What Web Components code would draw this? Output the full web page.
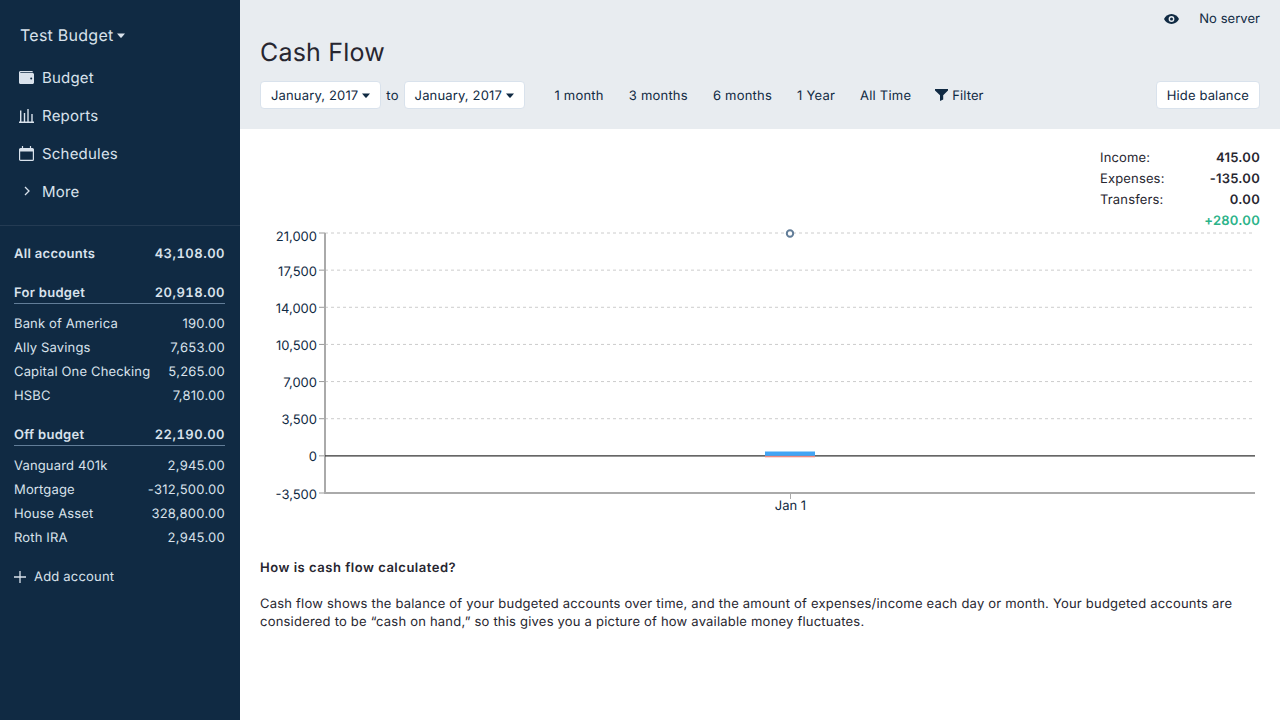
<!DOCTYPE html>
<html>
<head>
<meta charset="utf-8">
<title>Cash Flow</title>
<style>
  html, body { margin: 0; height: 100%; overflow: hidden; }
  body { font-family: Inter, "Liberation Sans", sans-serif; font-size: 13px; color: #272630; text-rendering: geometricPrecision; }
</style>
</head>
<body>
<app-shell>
  <app-sidebar slot="side"></app-sidebar>
  <report-header slot="top"></report-header>
  <cash-flow-summary slot="main"></cash-flow-summary>
  <cash-flow-chart slot="main"></cash-flow-chart>
  <report-notes slot="main"></report-notes>
</app-shell>

<script>
class AppShell extends HTMLElement {
    constructor() {
        super();
        this.attachShadow({mode: 'open'});
        this.shadowRoot.innerHTML = `
        <style>
            :host { display: flex; width: 1280px; height: 720px; background: #fff; }
            .side { flex: 0 0 240px; }
            .content { flex: 1; display: flex; flex-direction: column; min-width: 0; }
            .main { padding: 0 20px; }
        </style>
        <div class="side"><slot name="side"></slot></div>
        <div class="content">
            <slot name="top"></slot>
            <div class="main"><slot name="main"></slot></div>
        </div>`;
    }
}

class NavItem extends HTMLElement {
    constructor() {
        super();
        this.attachShadow({mode: 'open'});
        this.shadowRoot.innerHTML = `
        <style>
            :host { display: flex; align-items: center; height: 38px; padding-left: 19px; color: #d9e2ec; font-size: 15px; letter-spacing: 0.2px; }
            .icon { width: 15px; height: 15px; margin-right: 8px; display: flex; align-items: center; justify-content: center; }
            ::slotted(svg) { display: block; }
        </style>
        <span class="icon"><slot name="icon"></slot></span><slot></slot>`;
    }
}

class AccountRow extends HTMLElement {
    constructor() {
        super();
        this.attachShadow({mode: 'open'});
    }
    connectedCallback() {
        this.shadowRoot.innerHTML = `
        <style>
            :host { display: block; color: #d9e2ec; font-size: 13px; letter-spacing: 0.15px; }
            .row { display: flex; justify-content: space-between; align-items: center; height: 22px; padding-top: 2px; }
            .amt { letter-spacing: 0.25px; }
            :host([kind]) .row { font-weight: 600; letter-spacing: 0.3px; height: 20px; }
            :host([kind="head"]) .row { border-bottom: 1px solid #627d98; }
            :host([kind]) .amt { letter-spacing: 0.5px; font-variant-numeric: tabular-nums; }
        </style>
        <div class="row"><span>${this.getAttribute('name')}</span><span class="amt">${this.getAttribute('amount')}</span></div>`;
    }
}

class AppSidebar extends HTMLElement {
    constructor() {
        super();
        this.attachShadow({mode: 'open'});
        this.shadowRoot.innerHTML = `
        <style>
            :host { display: flex; flex-direction: column; height: 720px; background: #102a43; box-sizing: border-box; }
            .title { display: flex; align-items: center; height: 20px; margin: 25px 0 13px 20px; color: #d9e2ec; font-size: 16px; letter-spacing: 0.25px; }
            .title svg { margin-left: 4px; }
            .nav { padding-bottom: 15px; border-bottom: 1px solid #243b53; }
            .accounts { padding: 16px 15px 0 14px; }
            .group { margin-top: 17px; }
            .group + .group { margin-top: 16px; }
            .list { margin-top: 7px; }
            .add { display: flex; align-items: center; gap: 8px; margin-top: 15px; height: 24px; padding-top: 1px; color: #d9e2ec; font-size: 13px; letter-spacing: 0.2px; }
        </style>
        <div class="title">Test Budget<svg width="8" height="5" viewBox="0 0 8 5"><path d="M0 .5h8L4.6 4.500a.8.8 0 0 1-1.200 0z" fill="#d9e2ec"/></svg></div>
        <div class="nav">
            <nav-item>
                <svg slot="icon" width="15" height="13" viewBox="0 0 15 13"><path d="M1.500 0h11c.8 0 1.500.5 1.500 1.300H1.600c-.5 0-.6.700 0 .700H13.500c.8 0 1.500.6 1.500 1.400v8.100c0 .8-.7 1.500-1.500 1.500h-12C.7 13 0 12.300 0 11.500V1.500C0 .7.700 0 1.500 0z" fill="#d9e2ec"/><circle cx="12.200" cy="7.500" r="1" fill="#102a43"/></svg>
                Budget
            </nav-item>
            <nav-item>
                <svg slot="icon" width="15" height="15" viewBox="0 0 15 15" fill="none" stroke="#d9e2ec" stroke-width="1.400"><path d="M0 14.300h15M1.700 14V2.500M5.500 14V5M9 14V1M13 14V6"/></svg>
                Reports
            </nav-item>
            <nav-item>
                <svg slot="icon" width="15" height="15" viewBox="0 0 15 15" fill="none" stroke="#d9e2ec" stroke-width="1.200"><rect x=".6" y="2.600" width="13.800" height="11.800" rx="1"/><path d="M1 3.500h13v1.500H1z" fill="#d9e2ec"/><path d="M3.500 0v3M11.500 0v3"/></svg>
                Schedules
            </nav-item>
            <nav-item>
                <svg slot="icon" width="6" height="10" viewBox="0 0 6 10" fill="none" stroke="#d9e2ec" stroke-width="1.300"><path d="M1 1l4 4-4 4"/></svg>
                More
            </nav-item>
        </div>
        <div class="accounts">
            <account-row kind="total" name="All accounts" amount="43,108.00"></account-row>
            <div class="group">
                <account-row kind="head" name="For budget" amount="20,918.00"></account-row>
                <div class="list">
                    <account-row name="Bank of America" amount="190.00"></account-row>
                    <account-row name="Ally Savings" amount="7,653.00"></account-row>
                    <account-row name="Capital One Checking" amount="5,265.00"></account-row>
                    <account-row name="HSBC" amount="7,810.00"></account-row>
                </div>
            </div>
            <div class="group">
                <account-row kind="head" name="Off budget" amount="22,190.00"></account-row>
                <div class="list">
                    <account-row name="Vanguard 401k" amount="2,945.00"></account-row>
                    <account-row name="Mortgage" amount="-312,500.00"></account-row>
                    <account-row name="House Asset" amount="328,800.00"></account-row>
                    <account-row name="Roth IRA" amount="2,945.00"></account-row>
                </div>
            </div>
            <div class="add">
                <svg width="12" height="12" viewBox="0 0 12 12" stroke="#d9e2ec" stroke-width="1.300"><path d="M6 0v12M0 6h12"/></svg>
                Add account
            </div>
        </div>`;
    }
}

class ReportButton extends HTMLElement {
    constructor() {
        super();
        this.attachShadow({mode: 'open'});
        this.shadowRoot.innerHTML = `
        <style>
            :host { display: inline-flex; align-items: center; height: 24px; padding: 2px 10px 0; background: #fff; border: 1px solid #d9e2ec; border-radius: 4px; color: #102a43; font-size: 13px; letter-spacing: 0.15px; white-space: nowrap; }
            svg { display: none; margin-left: 4px; margin-top: -2px; }
            :host([caret]) svg { display: block; }
        </style>
        <slot></slot><svg width="8" height="5" viewBox="0 0 8 5"><path d="M0 .5h8L4.6 4.500a.8.8 0 0 1-1.200 0z" fill="#102a43"/></svg>`;
    }
}

class ReportHeader extends HTMLElement {
    constructor() {
        super();
        this.attachShadow({mode: 'open'});
        this.shadowRoot.innerHTML = `
        <style>
            :host { display: block; height: 129px; box-sizing: border-box; background: #e8ecf0; padding: 0 20px; color: #102a43; font-size: 13px; letter-spacing: 0.15px; }
            .top { display: flex; justify-content: flex-end; align-items: center; height: 37px; gap: 20px; letter-spacing: 0.05px; }
            h1 { margin: 0; padding-top: 1px; height: 30px; line-height: 30px; font-size: 25px; font-weight: 400; color: #272630; letter-spacing: 0.2px; }
            .bar { display: flex; align-items: center; margin-top: 13px; height: 28px; }
            .to { margin: 2px 5px 0; }
            .ranges { display: flex; align-items: center; gap: 25px; margin: 2px 0 0 29.500px; letter-spacing: 0.22px; }
            .filter { display: flex; align-items: center; gap: 4px; margin-left: -1px; letter-spacing: 0.1px; }
            .filter svg { margin-top: -2px; }
            .spacer { flex: 1; }
        </style>
        <div class="top">
            <svg width="15" height="10" viewBox="0 0 15 10"><path d="M7.500 0C4 0 1.300 2.300 0 5c1.300 2.700 4 5 7.500 5S13.700 7.700 15 5C13.700 2.300 11 0 7.500 0z" fill="#102a43"/><circle cx="7.500" cy="5" r="2.900" fill="#e8ecf0"/><circle cx="7.500" cy="5" r="1.500" fill="#102a43"/></svg>
            <span>No server</span>
        </div>
        <h1>Cash Flow</h1>
        <div class="bar">
            <report-button caret>January, 2017</report-button>
            <span class="to">to</span>
            <report-button caret>January, 2017</report-button>
            <div class="ranges">
                <span>1 month</span><span>3 months</span><span>6 months</span><span>1 Year</span><span>All Time</span>
                <span class="filter"><svg width="13" height="12" viewBox="0 0 13 12"><path d="M0 0h13v1.500L8.200 6.200V10.500L5 12V6.200L0 1.500z" fill="#102a43"/></svg>Filter</span>
            </div>
            <div class="spacer"></div>
            <report-button>Hide balance</report-button>
        </div>`;
    }
}

class CashFlowSummary extends HTMLElement {
    constructor() {
        super();
        this.attachShadow({mode: 'open'});
        this.shadowRoot.innerHTML = `
        <style>
            :host { display: grid; grid-template-columns: auto auto; justify-content: end; padding-top: 19px; margin-bottom: -26px; font-size: 13px; line-height: 21px; letter-spacing: 0.15px; color: #272630; position: relative; z-index: 1; }
            .l { width: 100px; }
            .v { width: 60px; text-align: right; font-weight: 600; white-space: nowrap; letter-spacing: 0.25px; }
            .net { color: #2bb389; }
        </style>
        <span class="l">Income:</span><span class="v">415.00</span>
        <span class="l">Expenses:</span><span class="v">-135.00</span>
        <span class="l">Transfers:</span><span class="v">0.00</span>
        <span class="l"></span><span class="v net">+280.00</span>`;
    }
}

class CashFlowChart extends HTMLElement {
    constructor() {
        super();
        this.attachShadow({mode: 'open'});
    }
    connectedCallback() {
        this.render();
    }
    render() {
        const labels = ['21,000', '17,500', '14,000', '10,500', '7,000', '3,500', '0', '-3,500'];
        const top = 206;
        const step = 260 / 7;
        let grid = '';
        labels.forEach((label, i) => {
            const sy = 233 + i * step - top;
            if (i < 6) {
                grid += `<line x1="65" x2="992" y1="${sy}" y2="${sy}" stroke="#ccc" stroke-dasharray="3 3"/>`;
            }
            grid += `<line x1="59" x2="65" y1="${sy}" y2="${sy}" stroke="#999"/>`;
            grid += `<text x="57" y="${sy + (i === 0 ? 7.500 : 5.500)}" text-anchor="end">${label}</text>`;
        });
        this.shadowRoot.innerHTML = `
        <style>
            :host { display: block; height: 353px; }
            svg { display: block; overflow: visible; }
            text { font-family: Inter, "Liberation Sans", sans-serif; font-size: 13px; fill: #102a43; }
        </style>
        <svg width="1000" height="353" viewBox="0 0 1000 353">
            ${grid}
            <line x1="65" x2="65" y1="${233 - top}" y2="${494 - top}" stroke="#aaa" stroke-width="2"/>
            <line x1="65" x2="995" y1="${493 - top}" y2="${493 - top}" stroke="#aaa" stroke-width="2"/>
            <line x1="530.500" x2="530.500" y1="${493 - top}" y2="${499 - top}" stroke="#aaa"/>
            <line x1="65" x2="995" y1="${455.900 - top}" y2="${455.900 - top}" stroke="#333" stroke-width="1.400"/>
            <rect x="505" y="${451.500 - top}" width="50" height="4.400" fill="#42a5f5"/>
            <rect x="505" y="${455.900 - top}" width="50" height="1.400" fill="#ef8a80"/>
            <circle cx="530" cy="${233.500 - top}" r="3.200" fill="#fff" stroke="#627d98" stroke-width="2"/>
            <text x="530.500" y="${510 - top}" text-anchor="middle">Jan 1</text>
        </svg>`;
    }
}

class ReportNotes extends HTMLElement {
    constructor() {
        super();
        this.attachShadow({mode: 'open'});
        this.shadowRoot.innerHTML = `
        <style>
            :host { display: block; font-size: 13px; line-height: 18px; color: #272630; letter-spacing: 0.21px; }
            p { margin: 0; }
            .q { font-weight: 600; margin-bottom: 18px; letter-spacing: 0.52px; }
        </style>
        <p class="q">How is cash flow calculated?</p>
        <p>Cash flow shows the balance of your budgeted accounts over time, and the amount of expenses/income each day or month. Your budgeted accounts are considered to be “cash on hand,” so this gives you a picture of how available money fluctuates.</p>`;
    }
}

customElements.define('app-shell', AppShell);
customElements.define('nav-item', NavItem);
customElements.define('account-row', AccountRow);
customElements.define('app-sidebar', AppSidebar);
customElements.define('report-button', ReportButton);
customElements.define('report-header', ReportHeader);
customElements.define('cash-flow-summary', CashFlowSummary);
customElements.define('cash-flow-chart', CashFlowChart);
customElements.define('report-notes', ReportNotes);
</script>
</body>
</html>
